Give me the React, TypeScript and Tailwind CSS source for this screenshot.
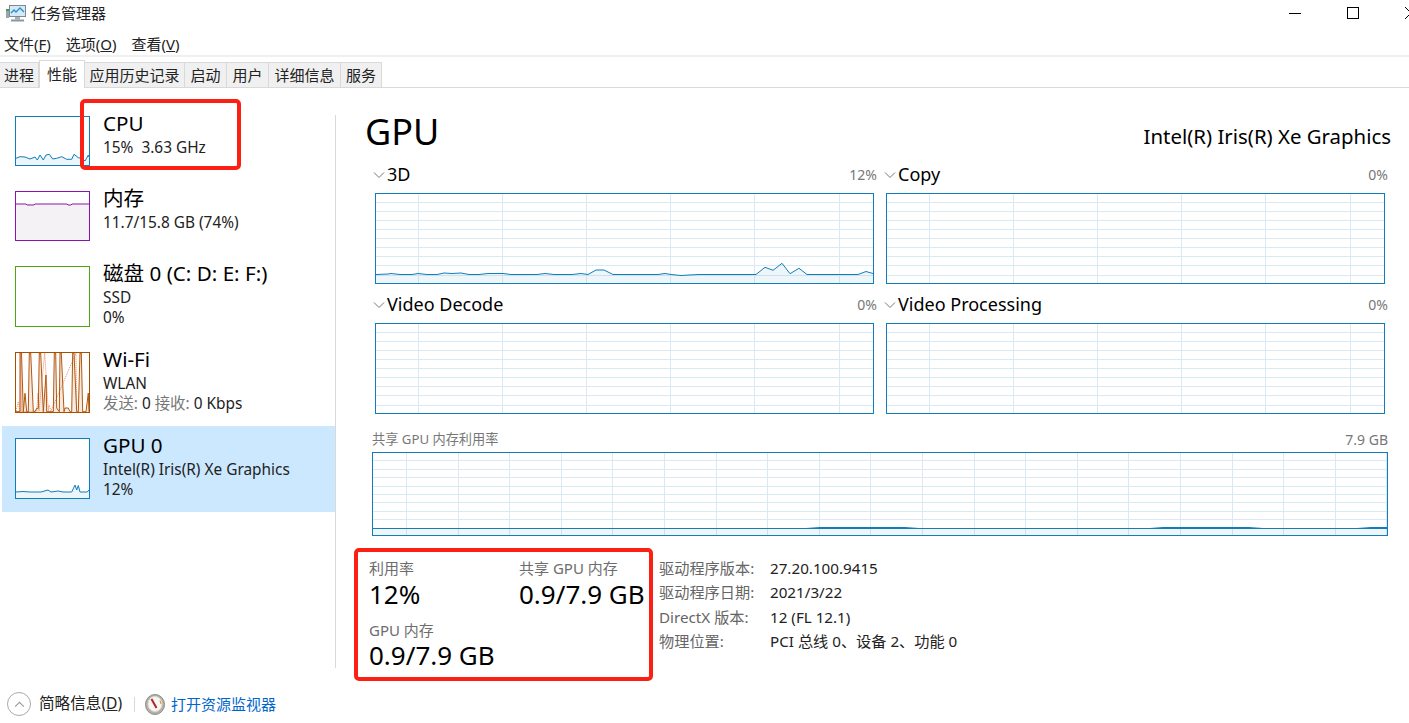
const font = "font-['Noto_Sans','Noto_Sans_CJK_SC',sans-serif]";

const tabs = [
  { label: "进程", w: "w-[39px]" },
  { label: "性能", w: "w-[46px]", active: true },
  { label: "应用历史记录", w: "w-[100px]" },
  { label: "启动", w: "w-[42px]" },
  { label: "用户", w: "w-[42px]" },
  { label: "详细信息", w: "w-[72px]" },
  { label: "服务", w: "w-[41px]" },
];

const cpuLine = "0,41.3 4,39.7 9,40 14,42 19,40 21.3,43 24,38 27.3,43 30,38 33.3,37.3 36.7,42 40.7,41.3 45.7,39.7 50.7,42.3 55.7,42.3 58,37.3 62.3,40.7 65.7,41.3 69,44 72.3,38 73,40";
const gpuLine = "0,53 7,52.5 14,53 25,53 32,51 35,53 42,52 47,53 55.7,53 59,46 60.7,51 62.3,46.5 64,53 71.3,53 73,51";
const wifiLine =
  "0,58.7 4,58.7 4,0 5.5,0 7.3,58.7 9,40.3 10.7,58.7 12.3,58.7 13.3,0 14.7,0 17.3,58.7 19,58.7 20.7,55.3 22.3,55.3 23.3,0 24.7,0 27.3,58.7 30,22 30.7,58.7 37.3,58.7 38.3,0 39.7,0 40.7,55 43.3,58.7 44,0 45.3,0 48,58.7 49,55 52.3,55 54,58.7 55.7,58.7 56.7,0 58,0 60.7,58.7 62.3,58.7 64,0 65.3,0 66.7,58.7 70,58.7 72.3,40 73,58.7";
const wifiDots = "0,58 2.3,48.7 4,58.7 4.7,0 5.6,58.7 20.7,58 22,40 23,58 28.7,0 32.3,58 33,52 35,58 60,0 60.7,58";
const threeDLine =
  "0,80.5 12,80 15,79.5 24,80.5 36,80.5 42,79.5 51,80.5 61,80.5 68,79 76,79.5 85,79 93,80.5 103,80.5 112,79.5 127,79.5 135,80.5 161,80.5 169,79.5 178,80.5 196,80.5 205,79.5 212,80.5 220,76 228,76 237,80.5 282,80.5 289,79.5 295,80.5 305,81.5 313,81 323,80.5 380,80.5 389,73.3 397,76.3 406,69.3 414,79.7 423,74.3 431,80.5 482,80.5 490,77.5 497,79.5";
const sharedLine = "0,75.5 433,75.5 447,74.5 532,74.5 546,75.5 777,75.5 790,74.5 876,74.5 890,75.5 984,75.5 998,74.5 1014,74.5";

const range = (n: number) => Array.from({ length: n }, (_, i) => i);

// grid lines snapped to the pixel so they stay crisp
function Grid({ w, h, stepX, startX, stepY, countY }: { w: number; h: number; stepX: number; startX: number; stepY: number; countY: number }) {
  return (
    <>
      {range(countY).map((i) => {
        const y = Math.round((i + 1) * stepY - 1) + 0.5;
        return <line key={i} x1={0} x2={w} y1={y} y2={y} stroke="#d9eaf4" strokeWidth={1} />;
      })}
      {range(Math.ceil((w - startX) / stepX)).map((i) => {
        const x = Math.round(startX + i * stepX) + 0.5;
        return <line key={i} x1={x} x2={x} y1={0} y2={h} stroke="#d9eaf4" strokeWidth={1} />;
      })}
    </>
  );
}

function BigChart({ line }: { line?: string }) {
  return (
    <div className="h-[91px] border border-[#117dbb] bg-white">
      <svg viewBox="0 0 497 89" className="block h-[89px] w-[497px]">
        <Grid w={497} h={89} stepX={84.2} startX={41.5} stepY={9.06} countY={9} />
        {line && <polygon points={`0,89 ${line} 497,89`} fill="#117dbb" fillOpacity={0.07} />}
        {line && <polyline points={line} fill="none" stroke="#117dbb" strokeWidth={1} />}
      </svg>
    </div>
  );
}

function ChartCell({ label, value, line }: { label: string; value: string; line?: string }) {
  return (
    <div className="flex flex-col">
      <div className="flex h-[31px] items-center">
        <svg viewBox="0 0 12 8" className="ml-[1px] h-[8px] w-[12px]" fill="none" stroke="#777" strokeWidth={1}>
          <path d="M1 1.5 6 6.5 11 1.5" />
        </svg>
        <span className="ml-[2px] text-[18px] text-black">{label}</span>
        <span className="ml-auto text-[14px] text-[#777]">{value}</span>
      </div>
      <div className="mx-[3px] mt-[3px]">
        <BigChart line={line} />
      </div>
    </div>
  );
}

function SideItem({ title, lines, selected, thumbH, border, children }: {
  title: string;
  lines: React.ReactNode[];
  selected?: boolean;
  thumbH: string;
  border: string;
  children?: React.ReactNode;
}) {
  return (
    <div className={`ml-[2px] flex pl-[13px] pt-3 ${selected ? "bg-[#cce8ff]" : ""} ${lines.length > 1 ? "h-[86px]" : "h-[75px]"}`}>
      <div className={`w-[75px] shrink-0 border bg-white ${thumbH} ${border}`}>{children}</div>
      <div className="ml-[13px] mt-[-6px] flex flex-col">
        <div className="mb-[2px] h-[26px] text-[20.6px] leading-[26px] text-black">{title}</div>
        {lines.map((l, i) => (
          <div key={i} className="h-[20px] text-[15.4px] leading-[20px] text-[#222]">{l}</div>
        ))}
      </div>
    </div>
  );
}

function Thumb({ h, children }: { h: number; children: React.ReactNode }) {
  return (
    <svg viewBox={`0 0 73 ${h}`} preserveAspectRatio="none" className="block h-full w-full">
      {children}
    </svg>
  );
}

function Stat({ label, value, lift }: { label: string; value: string; lift?: boolean }) {
  return (
    <div className="flex flex-col">
      <div className="h-[20px] text-[15px] leading-[20px] text-[#6d6d6d]">{label}</div>
      <div className={`text-[26px] text-black ${lift ? "h-[30px] leading-[30px]" : "h-[32px] leading-[32px]"}`}>{value}</div>
    </div>
  );
}

function AppIcon() {
  return (
    <svg viewBox="0 0 20 18" className="h-[18px] w-[20px]">
      <rect x="0" y="5" width="3" height="2" fill="#2fa84f" />
      <rect x="0" y="7" width="3" height="7" fill="#9aa5ad" />
      <rect x="3.5" y="1.5" width="16" height="11" fill="#d5e9f6" stroke="#7d8a92" />
      <polyline points="5,9 8,6 10,8 14,4 18,8" fill="none" stroke="#2f8fd0" strokeWidth="1.4" />
      <rect x="9" y="13" width="5" height="2.5" fill="#a7b0b6" />
      <rect x="5" y="15.5" width="13" height="2" fill="#8d979e" />
    </svg>
  );
}

function MonitorIcon() {
  return (
    <svg viewBox="0 0 20 21" className="h-[21px] w-[20px]">
      <ellipse cx="10" cy="10.5" rx="9.5" ry="10" fill="#b3b1aa" stroke="#8c8a84" />
      <ellipse cx="10" cy="10" rx="7" ry="7.5" fill="#f7f6f2" stroke="#dedbd2" />
      <path d="M6.5 5 11.5 14" stroke="#b4232a" strokeWidth="2" />
      <path d="M15 6.5 16 10" stroke="#e08a3c" strokeWidth="1" />
    </svg>
  );
}

export default function App() {
  return (
    <div className={`relative flex h-[723px] w-[1409px] flex-col overflow-hidden bg-white ${font}`}>
      {/* title bar */}
      <div className="flex h-[26px] shrink-0 items-center pl-[6px]">
        <AppIcon />
        <span className="ml-[5px] text-[15px] text-[#222]">任务管理器</span>
        <div className="ml-auto mr-[-31px] flex items-center">
          <div className="flex h-[26px] w-[58px] items-center justify-center">
            <div className="h-px w-[12px] bg-black" />
          </div>
          <div className="flex h-[26px] w-[58px] items-center justify-center">
            <div className="h-[12px] w-[12px] border border-black" />
          </div>
          <div className="flex h-[26px] w-[58px] items-center justify-center">
            <svg viewBox="0 0 12 12" className="h-[12px] w-[12px]" stroke="#000" strokeWidth={1}>
              <path d="M0 0 12 12M12 0 0 12" />
            </svg>
          </div>
        </div>
      </div>

      {/* menu */}
      <div className="flex h-[31px] shrink-0 items-center gap-[15px] border-b-2 border-[#f0f0f0] pl-[4px] pt-[8px] text-[15px] text-[#222]">
        <span>文件(<u>F</u>)</span>
        <span>选项(<u>O</u>)</span>
        <span>查看(<u>V</u>)</span>
      </div>

      {/* tabs */}
      <div className="flex h-[31px] shrink-0 items-end border-b border-[#d9d9d9]">
        {tabs.map((t) =>
          t.active ? (
            <div key={t.label} className={`z-10 mb-[-1px] flex h-[28px] items-center justify-center border border-b-0 border-[#d9d9d9] bg-white text-[15px] text-[#222] ${t.w}`}>
              {t.label}
            </div>
          ) : (
            <div key={t.label} className={`flex h-[25px] items-center justify-center border-r border-t border-[#d9d9d9] bg-[#f0f0f0] text-[15px] text-[#222] ${t.w}`}>
              {t.label}
            </div>
          ),
        )}
      </div>

      {/* body */}
      <div className="flex h-[592px] shrink-0">
        <div className="mt-[16px] flex w-[335px] shrink-0 flex-col">
          <SideItem title="CPU" lines={["15%\u00a0\u00a03.63 GHz"]} thumbH="h-[50px]" border="border-[#117dbb]">
            <Thumb h={48}>
              <polygon points={`0,48 ${cpuLine} 73,48`} fill="#117dbb" fillOpacity={0.08} />
              <polyline points={cpuLine} fill="none" stroke="#117dbb" />
            </Thumb>
          </SideItem>
          <SideItem title="内存" lines={["11.7/15.8 GB (74%)"]} thumbH="h-[50px]" border="border-[#8b12ae]">
            <Thumb h={48}>
              <rect x="0" y="12" width="73" height="36" fill="#f4f2f4" />
              <polyline points="0,12 10,12 11,13 18,13 19,12 51,12 52,13 55,13 56,12 73,12" fill="none" stroke="#8b12ae" />
            </Thumb>
          </SideItem>
          <SideItem title="磁盘 0 (C: D: E: F:)" lines={["SSD", "0%"]} thumbH="h-[61px]" border="border-[#4da60c]" />
          <SideItem
            title="Wi-Fi"
            lines={["WLAN", <><span className="text-[#777]">发送:</span> 0 <span className="text-[#777]">接收:</span> 0 Kbps</>]}
            thumbH="h-[61px]"
            border="border-[#a74f01]"
          >
            <Thumb h={59}>
              <polygon points={`${wifiLine} 73,59 0,59`} fill="#a74f01" fillOpacity={0.12} />
              <polyline points={wifiDots} fill="none" stroke="#ea8a5c" strokeDasharray="1 1" />
              <polyline points={wifiLine} fill="none" stroke="#b5570f" />
            </Thumb>
          </SideItem>
          <SideItem title="GPU 0" lines={["Intel(R) Iris(R) Xe Graphics", "12%"]} selected thumbH="h-[61px]" border="border-[#117dbb]">
            <Thumb h={59}>
              <polygon points={`0,59 ${gpuLine} 73,59`} fill="#117dbb" fillOpacity={0.08} />
              <polyline points={gpuLine} fill="none" stroke="#117dbb" />
            </Thumb>
          </SideItem>
        </div>
        <div className="mt-[27px] h-[553px] w-px shrink-0 bg-[#d9d9d9]" />

        {/* performance panel */}
        <div className="ml-[36px] flex w-[1016px] shrink-0 flex-col">
          <div className="ml-[-7px] mr-[-3px] mt-[17px] flex h-[52px] items-center justify-between">
            <span className="mt-[2px] text-[36px] leading-[52px] text-black">GPU</span>
            <span className="mt-[10px] text-[20.4px] text-black">Intel(R) Iris(R) Xe Graphics</span>
          </div>
          <div className="mt-[2px] grid grid-cols-2 gap-x-[6px] gap-y-[5px]">
            <ChartCell label="3D" value="12%" line={threeDLine} />
            <ChartCell label="Copy" value="0%" />
            <ChartCell label="Video Decode" value="0%" />
            <ChartCell label="Video Processing" value="0%" />
          </div>

          <div className="mt-[15px] flex h-[20px] items-center justify-between text-[#777]">
            <span className="mt-[2px] text-[13.2px]">共享 GPU 内存利用率</span>
            <span className="text-[14px]">7.9 GB</span>
          </div>
          <div className="mt-[3px] h-[84px] border border-[#117dbb]">
            <svg viewBox="0 0 1014 82" className="block h-[82px] w-[1014px]">
              <Grid w={1014} h={82} stepX={51.6} startX={33} stepY={8.4} countY={8} />
              <polygon points={`0,82 ${sharedLine} 1014,82`} fill="#117dbb" fillOpacity={0.07} />
              <line x1={0} x2={1014} y1={75.5} y2={75.5} stroke="#117dbb" />
              <polyline points={sharedLine} fill="none" stroke="#117dbb" />
            </svg>
          </div>

          <div className="ml-[-3px] mt-[22px] flex">
            <div className="grid w-[290px] grid-cols-[150px_140px] gap-y-[10px]">
              <Stat label="利用率" value="12%" />
              <Stat label="共享 GPU 内存" value="0.9/7.9 GB" />
              <Stat label="GPU 内存" value="0.9/7.9 GB" lift />
            </div>
            <div className="grid grid-cols-[111px_auto] gap-y-[4.4px] self-start text-[15.2px] leading-[20px]">
              <span className="text-[#666]">驱动程序版本:</span>
              <span className="text-[#222]">27.20.100.9415</span>
              <span className="text-[#666]">驱动程序日期:</span>
              <span className="text-[#222]">2021/3/22</span>
              <span className="text-[#666]">DirectX 版本:</span>
              <span className="text-[#222]">12 (FL 12.1)</span>
              <span className="text-[#666]">物理位置:</span>
              <span className="text-[#222]">PCI 总线 0、设备 2、功能 0</span>
            </div>
          </div>
        </div>
      </div>

      {/* footer */}
      <div className="flex h-[43px] items-center pl-[7px] pt-[5px]">
        <div className="flex h-[24px] w-[24px] items-center justify-center rounded-full border border-[#aaa]">
          <svg viewBox="0 0 12 8" className="h-[7px] w-[11px]" fill="none" stroke="#999" strokeWidth={1.2}>
            <path d="M1 6.5 6 1.5 11 6.5" />
          </svg>
        </div>
        <span className="ml-[8px] w-[94px] text-[15.6px] text-[#222]">简略信息(<u>D</u>)</span>
        <div className="ml-[1px] h-[15px] w-px bg-[#d8d8d8]" />
        <div className="ml-[10px] flex"><MonitorIcon /></div>
        <span className="ml-[6px] text-[15px] text-[#0066cc]">打开资源监视器</span>
      </div>

      {/* red annotation boxes drawn over the screenshot */}
      <div className="absolute left-[80px] top-[99px] h-[71px] w-[161px] rounded-[5px] border-[4px] border-[#fb1f14]" />
      <div className="absolute left-[354px] top-[548px] h-[133px] w-[299px] rounded-[5px] border-[4px] border-[#fb1f14]" />
    </div>
  );
}
